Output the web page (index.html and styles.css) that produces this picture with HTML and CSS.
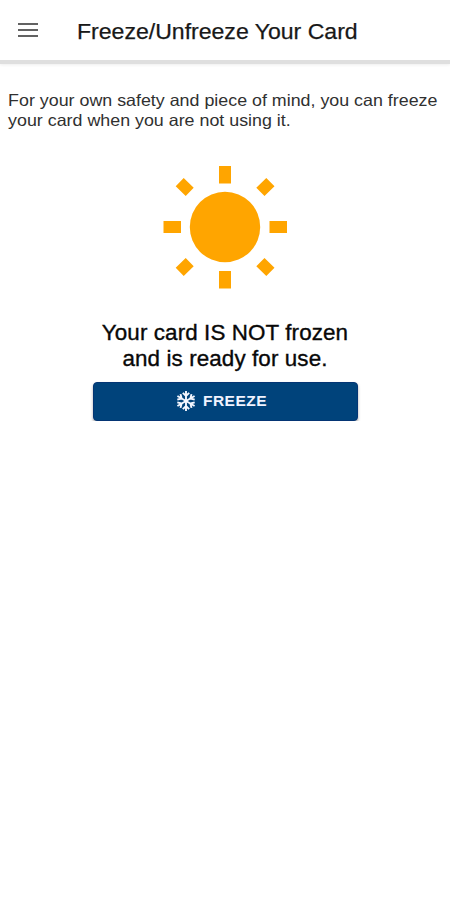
FILE: index.html
```html
<!DOCTYPE html>
<html lang="en">
<head>
<meta charset="utf-8">
<title>Freeze/Unfreeze Your Card</title>
<link rel="stylesheet" href="styles.css">
</head>
<body>
<header class="bar">
  <svg class="menu" viewBox="0 0 20 14" aria-hidden="true"><path d="M0 1h20M0 7h20M0 13h20"/></svg>
  <h1 class="title">Freeze/Unfreeze Your Card</h1>
</header>
<main class="content">
  <p class="intro">For your own safety and piece of mind, you can freeze<br>your card when you are not using it.</p>
  <svg class="sun" viewBox="0 0 124 124" aria-hidden="true">
    <circle cx="62" cy="62" r="35.2"/>
    <path d="M56 1h12v17.500H56zM56 106h12v17.500H56zM.5 56H18v12H.5zM106.500 56H124v12h-17.500zM20.700 13l10 9.700-8 8.300-10-9.700zM103.300 13l8.200 8.300-10 9.700-8.200-8.300zM22.700 93l8 8.300-10 9.700-8-8.300zM101.500 93l10 9.700-8.200 8.300-10-9.700z"/>
  </svg>
  <p class="status">Your card IS NOT frozen<br>and is ready for use.</p>
  <button class="freeze" type="button">
    <svg class="flake" viewBox="-10 -10 20 20" aria-hidden="true">
      <g id="arm"><path d="M0 0V-9.900M-3.200-8.200L0-5 3.200-8.200"/></g>
      <use href="#arm" transform="rotate(60)"/><use href="#arm" transform="rotate(120)"/><use href="#arm" transform="rotate(180)"/><use href="#arm" transform="rotate(240)"/><use href="#arm" transform="rotate(300)"/>
    </svg>
    <span>FREEZE</span>
  </button>
</main>
</body>
</html>
```
FILE: styles.css
```css
* { box-sizing: border-box; }
body { margin: 0; background: #fff; color: #181818; font-family: "Liberation Sans", Arial, sans-serif; }
.bar { height: 64px; padding: 0 18px; display: flex; align-items: center; border-bottom: 4px solid #dfdfdf; box-shadow: 0 1px 3px #eee; }
.menu { width: 20px; height: 14px; margin-right: 39px; fill: none; stroke: #626262; stroke-width: 2; }
.title { margin: 3px 0 0; font-size: 22px; font-weight: 400; white-space: nowrap; transform: scaleX(1.048); transform-origin: left; -webkit-text-stroke: .25px; }
.content { display: flex; flex-direction: column; align-items: center; }
.intro { align-self: flex-start; margin: 27px 0 0; padding-left: 7.500px; font-size: 16.500px; line-height: 19.500px; white-space: nowrap; color: #303030; transform: scaleX(1.081); transform-origin: left; }
.sun { width: 124px; height: 124px; margin-top: 35px; fill: #ffa500; }
.status { margin: 31px 0 0; font-size: 22px; line-height: 26px; letter-spacing: .1px; text-align: center; white-space: nowrap; color: #080808; transform: scaleX(1.018); -webkit-text-stroke: .35px; }
.freeze { width: 265px; height: 39px; margin-top: 10px; padding: 0 7px 1px 0; display: flex; align-items: center; justify-content: center; gap: 7px; border: 1px solid #043574; border-radius: 4px; background: #00437b; box-shadow: 0 2px 3px #aaa; color: #f0f3ff; font: bold 15.500px "Liberation Sans", Arial, sans-serif; letter-spacing: .5px; }
.flake { width: 20px; height: 20px; fill: none; stroke: #f4f7ff; stroke-width: 1.9; }
```
